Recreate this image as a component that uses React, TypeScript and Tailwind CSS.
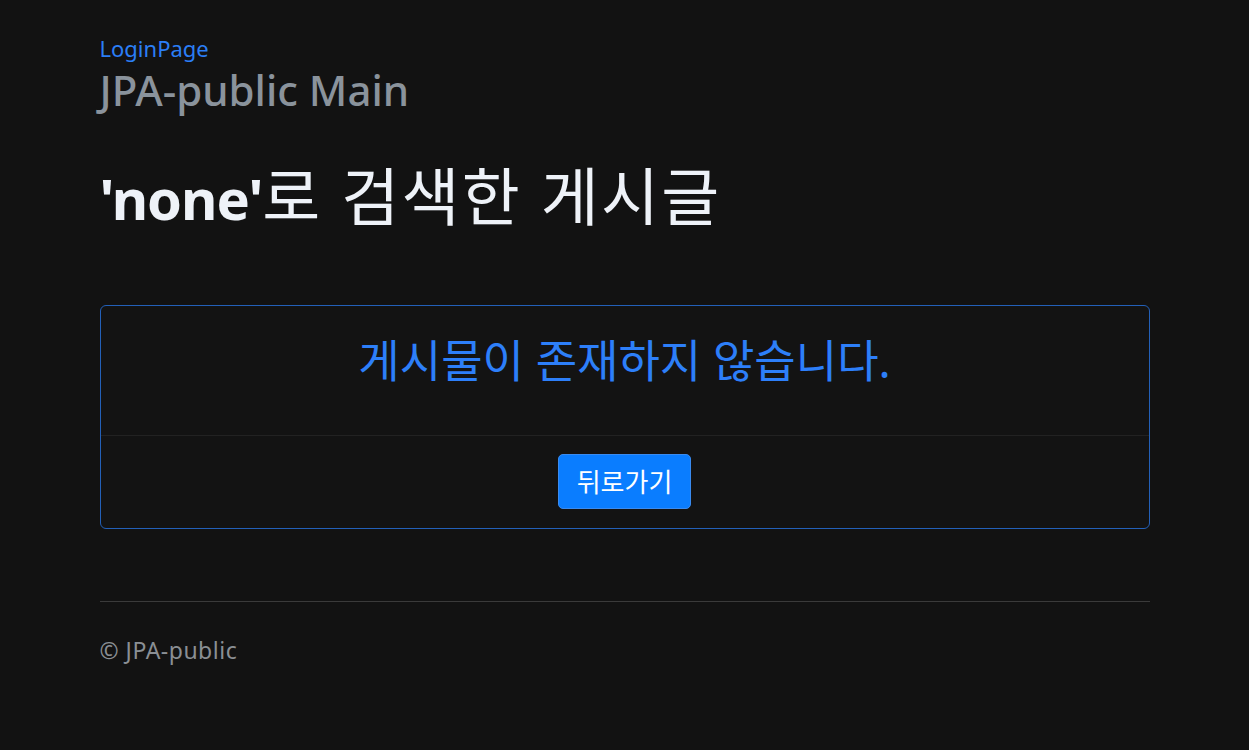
import React from "react";

export default function App() {
  const font = { fontFamily: '"Noto Sans", "Noto Sans CJK KR", sans-serif' };
  return (
    <div className="min-h-[750px] bg-[#121212]" style={font}>
      <div className="mx-auto w-[1050px] pt-[33px] pb-[60px]">
        <a className="block text-[22px] leading-[30px] text-[#2b7ef6]">LoginPage</a>
        <h1 className="mt-[3px] text-[42px] leading-[48px] font-medium text-[#8a939c]">JPA-public Main</h1>
        <h2 className="mt-[48px] whitespace-nowrap text-[56px] leading-[67px] text-[#eef2f8]">
          <span className="font-bold tracking-[-1px]">'none'</span>
          <span className="text-[63px] tracking-[2.3px]">로 검색한 게시글</span>
        </h2>
        <div className="mt-[73px] rounded-[6px] border border-[#2360b8] bg-[#131313]">
          <div className="pt-[31px] pb-[50px] text-center text-[45px] leading-[48px] text-[#2d7ff9]">
            게시물이 존재하지 않습니다.
          </div>
          <div className="flex justify-center border-t border-[#222222] pt-[18px] pb-[19px]">
            <button className="h-[55px] w-[133px] rounded-[5px] border border-[#3a8bf0] bg-[#0a7dff] text-[26px] leading-none text-white">
              뒤로가기
            </button>
          </div>
        </div>
        <hr className="mt-[72px] border-t border-[#3a3a3a]" />
        <p className="mt-[32px] text-[23px] leading-[33px] tracking-[0.5px] text-[#8a8f94]">© JPA-public</p>
      </div>
    </div>
  );
}
